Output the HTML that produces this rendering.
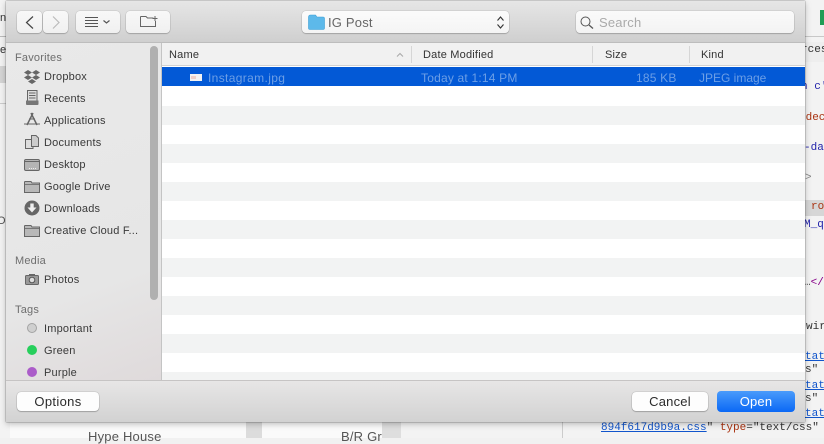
<!DOCTYPE html>
<html><head><meta charset="utf-8">
<style>
html,body{margin:0;padding:0;width:824px;height:438px;overflow:hidden;background:#f1f1f1;font-family:"Liberation Sans",sans-serif}
.a{position:absolute}
.t{position:absolute;white-space:nowrap;font-size:11px;line-height:14px;color:#3a3a3a;letter-spacing:.2px}
.m{position:absolute;white-space:nowrap;font-family:"Liberation Mono",monospace;font-size:11px;line-height:13px}
.btn{position:absolute;background:#fdfdfd;border-radius:4px;box-shadow:0 0 1px rgba(0,0,0,.45),0 1px 1px rgba(0,0,0,.2)}
.tb{position:absolute;background:linear-gradient(#f8f8f8,#f0f0f0);border-radius:4px;box-shadow:0 0 1px rgba(0,0,0,.4),0 1px 1px rgba(0,0,0,.18)}
svg{position:absolute;overflow:visible}
</style></head>
<body>
<!-- background -->
<div class="a" style="left:0;top:0;width:824px;height:438px;background:#f3f3f3"></div>
<div class="a" style="left:0;top:36px;width:6px;height:1px;background:#bbb"></div>
<div class="a" style="left:0;top:66px;width:6px;height:17px;background:#d4d4d4"></div>
<div class="a" style="left:0;top:103px;width:6px;height:1px;background:#ccc"></div>
<div class="a" style="left:805px;top:36px;width:19px;height:1px;background:#c8c8c8"></div>
<div class="a" style="left:805px;top:42px;width:19px;height:20px;background:#eee"></div>
<div class="a" style="left:805px;top:200px;width:19px;height:16px;background:#d6d6d6"></div>
<div class="a" style="left:820px;top:10px;width:4px;height:15px;background:#1f9d55"></div>
<div class="t" style="left:0;top:11px;color:#333">n:</div>
<div class="t" style="left:0;top:43px;color:#333">es</div>
<div class="t" style="left:-3px;top:214px;color:#555">O</div>
<div class="m" style="left:801px;top:44px;color:#333">rces</div>
<div class="m" style="left:801px;top:81px;color:#22a">n c'</div>
<div class="m" style="left:799px;top:112px;color:#a31">ndec</div>
<div class="m" style="left:804px;top:142px;color:#22a">-da</div>
<div class="m" style="left:805px;top:172px;color:#888">&gt;</div>
<div class="m" style="left:811px;top:201px;color:#a31">ro</div>
<div class="m" style="left:804px;top:219px;color:#22a">M_ql</div>
<div class="m" style="left:804px;top:277px;color:#555">…<span style="color:#808">&lt;/</span></div>
<div class="m" style="left:806px;top:321px;color:#333">wir</div>
<div class="m" style="left:805px;top:351px;color:#15c;text-decoration:underline">tat</div>
<div class="m" style="left:805px;top:364px;color:#333">s"</div>
<div class="m" style="left:805px;top:380px;color:#15c;text-decoration:underline">tat</div>
<div class="m" style="left:805px;top:393px;color:#333">s"</div>
<div class="m" style="left:805px;top:408px;color:#15c;text-decoration:underline">tat</div>
<div class="m" style="left:601px;top:422px;color:#333"><span style="color:#15c;text-decoration:underline">894f617d9b9a.css</span>" <span style="color:#a31">type</span>="text/css"</div>
<div class="a" style="left:10px;top:422px;width:236px;height:16px;background:#fafafa"></div>
<div class="a" style="left:246px;top:422px;width:16px;height:16px;background:#dcdcdc"></div>
<div class="a" style="left:262px;top:422px;width:120px;height:16px;background:#fafafa"></div>
<div class="a" style="left:382px;top:422px;width:19px;height:16px;background:#dedede"></div>
<div class="a" style="left:562px;top:422px;width:1px;height:16px;background:#ccc"></div>
<div class="t" style="left:88px;top:430px;font-size:13px;color:#555">Hype House</div>
<div class="t" style="left:341px;top:430px;font-size:13px;color:#555;width:41px;overflow:hidden">B/R Gr</div>

<!-- dialog -->
<div class="a" style="left:6px;top:1px;width:799px;height:421px;background:#e4e4e4;box-shadow:0 0 1px rgba(0,0,0,.7),0 2px 6px rgba(0,0,0,.25)"></div>
<!-- toolbar -->
<div class="a" style="left:6px;top:1px;width:799px;height:42px;background:linear-gradient(#e6e6e6,#cfcfcf);border-bottom:1px solid #bdbdbd;box-sizing:border-box"></div>
<div class="tb" style="left:17px;top:11px;width:25px;height:22px"></div>
<div class="tb" style="left:43px;top:11px;width:25px;height:22px"></div>
<div class="tb" style="left:76px;top:11px;width:44px;height:22px"></div>
<div class="tb" style="left:126px;top:11px;width:44px;height:22px"></div>
<div class="tb" style="left:302px;top:11px;width:207px;height:22px;background:linear-gradient(#fbfbfb,#f4f4f4)"></div>
<div class="tb" style="left:576px;top:11px;width:218px;height:22px;background:linear-gradient(#fafafa,#f3f3f3)"></div>
<svg style="left:0;top:0" width="824" height="60">
<path d="M33 16.500L26.500 22.500L33 28.500" fill="none" stroke="#444" stroke-width="1.200"/>
<path d="M53 16.500L59 22.500L53 28.500" fill="none" stroke="#bbb" stroke-width="1.200"/>
<path d="M85 17.500H98M85 20.500H98M85 23.500H98M85 26.500H98" stroke="#555" stroke-width="1"/>
<path d="M103.500 20.500L106.500 23L109.500 20.500" fill="none" stroke="#555" stroke-width="1.200"/>
<path d="M140.500 16.500H146L147.500 18H153.500M140.500 16.500V26.500H155.500V21" fill="none" stroke="#666"/>
<path d="M155 16V21M152.500 18.500H157.500" stroke="#666"/>
<path d="M308.500 17C308.500 15.800 309.300 15 310.500 15H315.500L317 17H323C323.800 17 324.500 17.700 324.500 18.500V28C324.500 28.800 323.800 29.500 323 29.500H310C309.200 29.500 308.500 28.800 308.500 28Z" fill="#5db9ea" stroke="#3d9fd6" stroke-width=".6"/>
<path d="M497.500 20.500L500.500 17L503.500 20.500M497.500 24.500L500.500 28L503.500 24.500" fill="none" stroke="#333" stroke-width="1.100"/>
<circle cx="585.500" cy="21.500" r="4.500" fill="none" stroke="#555" stroke-width="1"/>
<path d="M589 25L593 28.500" stroke="#555" stroke-width="1.300"/>
</svg>
<div class="t" style="left:328px;top:15px;font-size:13px;line-height:16px;color:#666">IG Post</div>
<div class="t" style="left:599px;top:15px;font-size:13px;line-height:16px;color:#aaa">Search</div>

<!-- sidebar -->
<div class="a" style="left:6px;top:43px;width:155px;height:337px;background:linear-gradient(160deg,#e9e9e9 0%,#e6e6e6 70%,#dfdadb 100%);border-right:1px solid #c4c4c4"></div>
<div class="a" style="left:150px;top:46px;width:8px;height:254px;background:#b0b0b0;border-radius:4px"></div>
<div class="t" style="left:15px;top:51px;color:#6e6e6e">Favorites</div>
<div class="t" style="left:15px;top:254px;color:#6e6e6e">Media</div>
<div class="t" style="left:15px;top:303px;color:#6e6e6e">Tags</div>
<div class="t" style="left:44px;top:70px">Dropbox</div>
<div class="t" style="left:44px;top:92px">Recents</div>
<div class="t" style="left:44px;top:114px">Applications</div>
<div class="t" style="left:44px;top:136px">Documents</div>
<div class="t" style="left:44px;top:158px">Desktop</div>
<div class="t" style="left:44px;top:180px">Google Drive</div>
<div class="t" style="left:44px;top:202px">Downloads</div>
<div class="t" style="left:44px;top:224px">Creative Cloud F...</div>
<div class="t" style="left:44px;top:273px">Photos</div>
<div class="t" style="left:44px;top:322px">Important</div>
<div class="t" style="left:44px;top:344px">Green</div>
<div class="t" style="left:44px;top:366px">Purple</div>

<svg style="left:0;top:0" width="170" height="380">
<!-- dropbox -->
<path d="M28 70L32 72.500L28 75L24 72.500ZM36 70L40 72.500L36 75L32 72.500ZM28 75L32 77.500L28 80L24 77.500ZM36 75L40 77.500L36 80L32 77.500ZM32 79L36 81.500L32 84L28 81.500Z" fill="#666"/>
<!-- recents -->
<path d="M27.500 90.500H37V101H27.500Z" fill="#ddd" stroke="#666"/>
<path d="M29 93H35.500M29 95.500H35.500M29 98H35.500" stroke="#666" stroke-width=".9"/>
<path d="M26 100.500H38.500V104C38.500 104.600 38 105 37.500 105H27C26.400 105 26 104.600 26 104Z" fill="#777"/>
<!-- applications -->
<path d="M33 113L27 125M31 113L37 125" stroke="#666" stroke-width="1.500"/>
<path d="M24 124H40M29 119H35" stroke="#666" stroke-width="1.100"/>
<!-- documents -->
<path d="M25.500 139.500H33V148.500H25.500Z" fill="#ddd" stroke="#666"/>
<path d="M31.500 135.500H36L38.500 138V146.500H31.500Z" fill="#ccc" stroke="#666"/>
<!-- desktop -->
<rect x="24.500" y="159.500" width="15" height="11" rx="1.500" fill="#b5b5b5" stroke="#666"/>
<path d="M25 161.500H39" stroke="#666"/>
<path d="M29 168.500H36" stroke="#eee" stroke-dasharray="1 1"/>
<!-- google drive -->
<path d="M24.500 182V192.500H39.500V183H32L31 181.500H25Z" fill="#b8b8b8" stroke="#666"/>
<path d="M25 184.500H39" stroke="#777"/>
<!-- downloads -->
<circle cx="32" cy="208" r="7.500" fill="#666"/>
<path d="M30.300 203.500H33.700V207.500H36.500L32 212.500L27.500 207.500H30.300Z" fill="#eee"/>
<!-- creative cloud -->
<path d="M24.500 226V236.500H39.500V227H32L31 225.500H25Z" fill="#b8b8b8" stroke="#666"/>
<path d="M25 228.500H39" stroke="#777"/>
<!-- photos -->
<rect x="25.500" y="275.500" width="13" height="9" rx="1" fill="#999" stroke="#666"/>
<rect x="29" y="274" width="6" height="2" fill="#666"/>
<circle cx="32" cy="280" r="2.800" fill="#ddd" stroke="#555"/>
<!-- tags -->
<circle cx="32" cy="328" r="4.500" fill="#cfcfcf" stroke="#a3a3a3"/>
<circle cx="32" cy="350" r="5" fill="#27cf5c"/>
<circle cx="32" cy="372" r="5" fill="#ab5cc9"/>
</svg>

<!-- list -->
<div class="a" style="left:162px;top:43px;width:643px;height:337px;background:#fff"></div>
<div class="a" style="left:162px;top:43px;width:643px;height:23px;background:#f1f1f1;border-bottom:1px solid #d2d2d2;box-sizing:border-box"></div>
<div class="a" style="left:411px;top:46px;width:1px;height:17px;background:#d6d6d6"></div>
<div class="a" style="left:592px;top:46px;width:1px;height:17px;background:#d6d6d6"></div>
<div class="a" style="left:689px;top:46px;width:1px;height:17px;background:#d6d6d6"></div>
<svg style="left:0;top:0" width="824" height="70"><path d="M397 56.500L400 53.500L403 56.500" fill="none" stroke="#aaa" stroke-width="1.100"/></svg>
<div class="t" style="left:169px;top:48px;color:#333">Name</div>
<div class="t" style="left:423px;top:48px;color:#333">Date Modified</div>
<div class="t" style="left:605px;top:48px;color:#333">Size</div>
<div class="t" style="left:701px;top:48px;color:#333">Kind</div>

<div class="a" style="left:162px;top:67px;width:643px;height:19px;background:#0359d6"></div>
<div class="a" style="left:190px;top:74px;width:12px;height:7px;background:#f2f2f2"></div>
<div class="a" style="left:191px;top:76px;width:5px;height:3px;background:#eecfc8"></div>
<div class="t" style="left:208px;top:71px;font-size:12px;letter-spacing:.35px;color:#6d9fe6">Instagram.jpg</div>
<div class="t" style="left:421px;top:71px;font-size:12px;color:#6d9fe6">Today at 1:14 PM</div>
<div class="t" style="left:636px;top:71px;font-size:12px;color:#6d9fe6">185 KB</div>
<div class="t" style="left:699px;top:71px;font-size:12px;letter-spacing:0;color:#6d9fe6">JPEG image</div>

<div class="a" style="left:162px;top:106px;width:643px;height:19px;background:#f2f3f3"></div>
<div class="a" style="left:162px;top:144px;width:643px;height:19px;background:#f2f3f3"></div>
<div class="a" style="left:162px;top:182px;width:643px;height:19px;background:#f2f3f3"></div>
<div class="a" style="left:162px;top:220px;width:643px;height:19px;background:#f2f3f3"></div>
<div class="a" style="left:162px;top:258px;width:643px;height:19px;background:#f2f3f3"></div>
<div class="a" style="left:162px;top:296px;width:643px;height:19px;background:#f2f3f3"></div>
<div class="a" style="left:162px;top:334px;width:643px;height:19px;background:#f2f3f3"></div>
<div class="a" style="left:162px;top:372px;width:643px;height:8px;background:#f2f3f3"></div>

<!-- bottom -->
<div class="a" style="left:6px;top:380px;width:799px;height:42px;background:linear-gradient(#e7e6e6,#d2d2d2);border-top:1px solid #c6c4c4;box-sizing:border-box"></div>
<div class="btn" style="left:17px;top:392px;width:82px;height:19px"></div>
<div class="t" style="left:17px;top:394px;width:82px;text-align:center;font-size:13px;line-height:16px;letter-spacing:.35px;color:#2b2b2b">Options</div>
<div class="btn" style="left:632px;top:392px;width:76px;height:19px"></div>
<div class="t" style="left:632px;top:394px;width:76px;text-align:center;font-size:13px;line-height:16px;color:#2b2b2b">Cancel</div>
<div class="a" style="left:717px;top:391px;width:78px;height:21px;border-radius:4px;background:linear-gradient(#4a9bfb,#0a68f5)"></div>
<div class="t" style="left:717px;top:394px;width:78px;text-align:center;font-size:13px;line-height:16px;color:#fff">Open</div>
</body></html>
